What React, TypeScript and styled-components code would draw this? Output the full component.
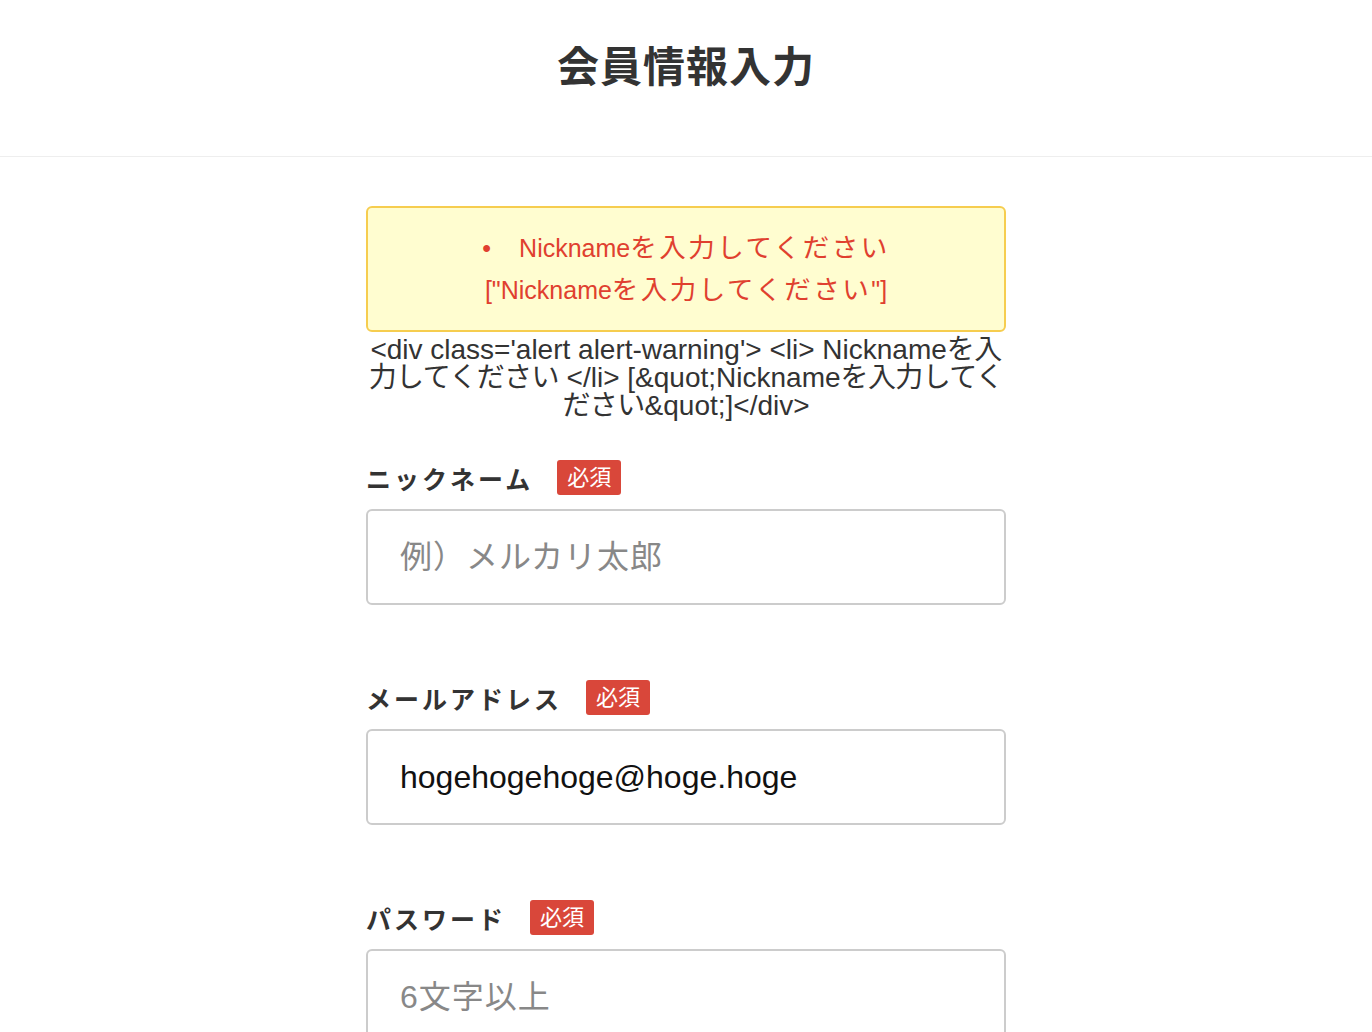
import React from 'react';
import styled, { createGlobalStyle } from 'styled-components';

const GlobalStyle = createGlobalStyle`
  body {
    margin: 0;
    background: #fff;
    font-family: "Liberation Sans", "Noto Sans CJK JP", sans-serif;
    color: #333;
  }
`;

const Header = styled.header`
  box-sizing: border-box;
  height: 157px;
  padding-top: 38px;
  border-bottom: 1px solid #eee;
  text-align: center;
`;

const Title = styled.h1`
  margin: 0;
  font-size: 42px;
  line-height: 60px;
  font-weight: 700;
  letter-spacing: 1px;
  color: #333;
`;

const Main = styled.main`
  width: 640px;
  margin: 0 auto;
  padding-top: 49px;
`;

const Alert = styled.div`
  border: 2px solid #f6cd4f;
  border-radius: 6px;
  background: #fffdd0;
  color: #e0402f;
  font-size: 25px;
  line-height: 42px;
  text-align: center;
  padding: 19px 0;
`;

const AlertList = styled.ul`
  margin: 0;
  padding: 0;
  list-style: none;
`;

const AlertItem = styled.li`
  &::before {
    content: '•';
    margin-right: 28px;
  }
`;

const Jp = styled.span<{ $size?: number; $gap?: number }>`
  font-size: ${p => p.$size ?? 1}em;
  letter-spacing: ${p => p.$gap ?? 0}px;
`;

const RawText = styled.div`
  font-size: 28px;
  line-height: 28px;
  text-align: center;
  color: #333;
  margin: 4px 0 40px;
`;

const Field = styled.div`
  margin-bottom: 75px;
`;

const LabelRow = styled.div`
  display: flex;
  align-items: flex-start;
  gap: 24px;
  margin-bottom: 11px;
`;

const Label = styled.label`
  font-size: 25px;
  line-height: 35px;
  padding-top: 3px;
  font-weight: 700;
  letter-spacing: 3px;
  color: #333;
`;

const Badge = styled.span`
  background: #d9473a;
  color: #fff;
  font-size: 22px;
  line-height: 35px;
  padding: 0 10px;
  border-radius: 3px;
`;

const Input = styled.input`
  box-sizing: border-box;
  display: block;
  width: 100%;
  height: 96px;
  border: 2px solid #ccc;
  border-radius: 6px;
  padding: 0 32px;
  font-family: "Liberation Sans", "Noto Sans CJK JP", sans-serif;
  font-size: 32px;
  color: #111;
  outline: none;
  &::placeholder {
    color: #888;
    letter-spacing: 1px;
  }
`;

const fields = [
  { label: 'ニックネーム', placeholder: '例）メルカリ太郎', value: '' },
  { label: 'メールアドレス', placeholder: 'PC・携帯どちらでも可', value: 'hogehogehoge@hoge.hoge' },
  { label: 'パスワード', placeholder: '6文字以上', value: '' },
];

export default function App() {
  return (
    <>
      <GlobalStyle />
      <Header>
        <Title>会員情報入力</Title>
      </Header>
      <Main>
        <Alert>
          <AlertList>
            <AlertItem>
              Nickname<Jp $size={1.06} $gap={2.5}>を入力してください</Jp>
            </AlertItem>
          </AlertList>
          ["Nickname<Jp $size={1.06} $gap={2.5}>を入力してください</Jp>"]
        </Alert>
        <RawText>
          &lt;div class='alert alert-warning'&gt; &lt;li&gt; Nickname<Jp $gap={-0.6}>を入力してください</Jp> &lt;/li&gt;
          [&amp;quot;Nickname<Jp $gap={-0.6}>を入力してください</Jp>&amp;quot;]&lt;/div&gt;
        </RawText>
        {fields.map(f => (
          <Field key={f.label}>
            <LabelRow>
              <Label>{f.label}</Label>
              <Badge>必須</Badge>
            </LabelRow>
            <Input placeholder={f.placeholder} defaultValue={f.value} />
          </Field>
        ))}
      </Main>
    </>
  );
}
